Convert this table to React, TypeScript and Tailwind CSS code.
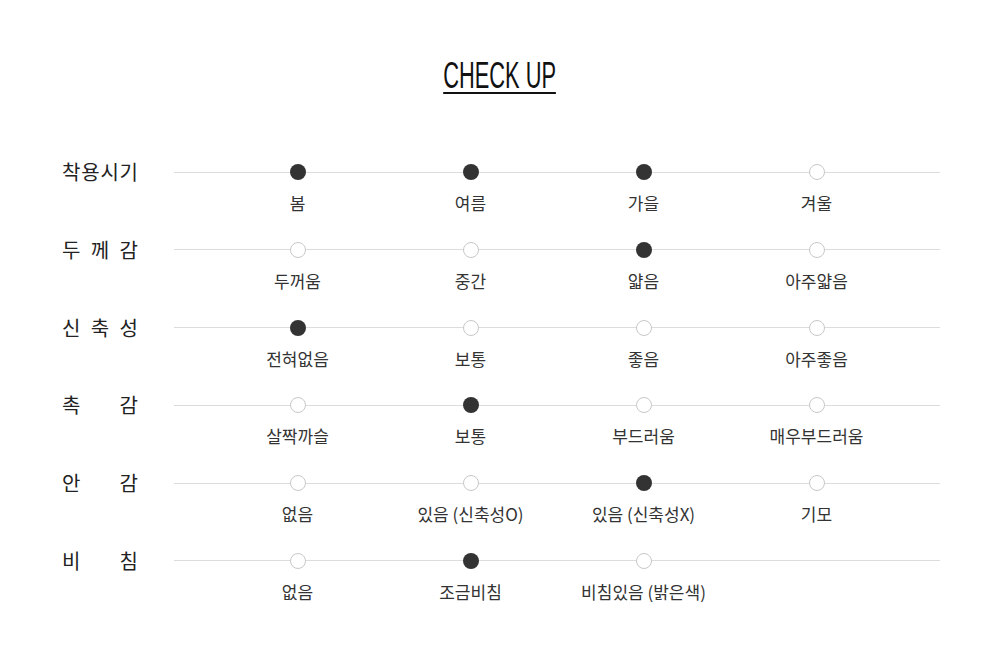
const rows: { label: string; options: string[]; active: number[] }[] = [
  { label: "착용시기", options: ["봄", "여름", "가을", "겨울"], active: [0, 1, 2] },
  { label: "두께감", options: ["두꺼움", "중간", "얇음", "아주얇음"], active: [2] },
  { label: "신축성", options: ["전혀없음", "보통", "좋음", "아주좋음"], active: [0] },
  { label: "촉감", options: ["살짝까슬", "보통", "부드러움", "매우부드러움"], active: [1] },
  { label: "안감", options: ["없음", "있음 (신축성O)", "있음 (신축성X)", "기모"], active: [2] },
  { label: "비침", options: ["없음", "조금비침", "비침있음 (밝은색)"], active: [1] },
]

function Row({ label, options, active }: (typeof rows)[number]) {
  return (
    <div className="flex h-[77.8px]">
      <div className="w-[174px] pl-[62px]">
        <div className="flex h-4 w-[76px] items-center justify-between text-[20px] leading-4 text-[#222]">
          {label.split("").map((ch, i) => (
            <span key={i}>{ch}</span>
          ))}
        </div>
      </div>
      <div className="w-[766px]">
        <div className="grid h-4 grid-cols-[repeat(4,173px)] bg-[linear-gradient(#dcdcdc,#dcdcdc)] bg-size-[100%_1px] bg-center bg-no-repeat pl-[37px]">
          {options.map((_, i) => (
            <div key={i} className="flex justify-center">
              {active.includes(i) ? (
                <span className="h-4 w-4 rounded-full bg-[#333]" />
              ) : (
                <span className="h-4 w-4 rounded-full border border-[#c8c8c8] bg-white" />
              )}
            </div>
          ))}
        </div>
        <div className="mt-[13px] grid grid-cols-[repeat(4,173px)] pl-[37px]">
          {options.map((o, i) => (
            <div key={i} className="text-center text-[17px] leading-5 text-[#333]">
              {o}
            </div>
          ))}
        </div>
      </div>
    </div>
  )
}

export default function App() {
  return (
    <main
      className="min-h-[661px] w-full bg-white"
      style={{ fontFamily: '"Noto Sans CJK KR", "Noto Sans", sans-serif' }}
    >
      <div className="flex justify-center pt-[59px]">
        <h1
          className="inline-block origin-center scale-x-[0.59] border-b-2 border-[#111] text-[37px] leading-[33px] font-normal text-[#111]"
          style={{ fontFamily: '"Liberation Sans", Arial, sans-serif' }}
        >
          CHECK UP
        </h1>
      </div>
      <div className="mt-[70px] flex flex-col">
        {rows.map((r) => (
          <Row key={r.label} {...r} />
        ))}
      </div>
    </main>
  )
}
